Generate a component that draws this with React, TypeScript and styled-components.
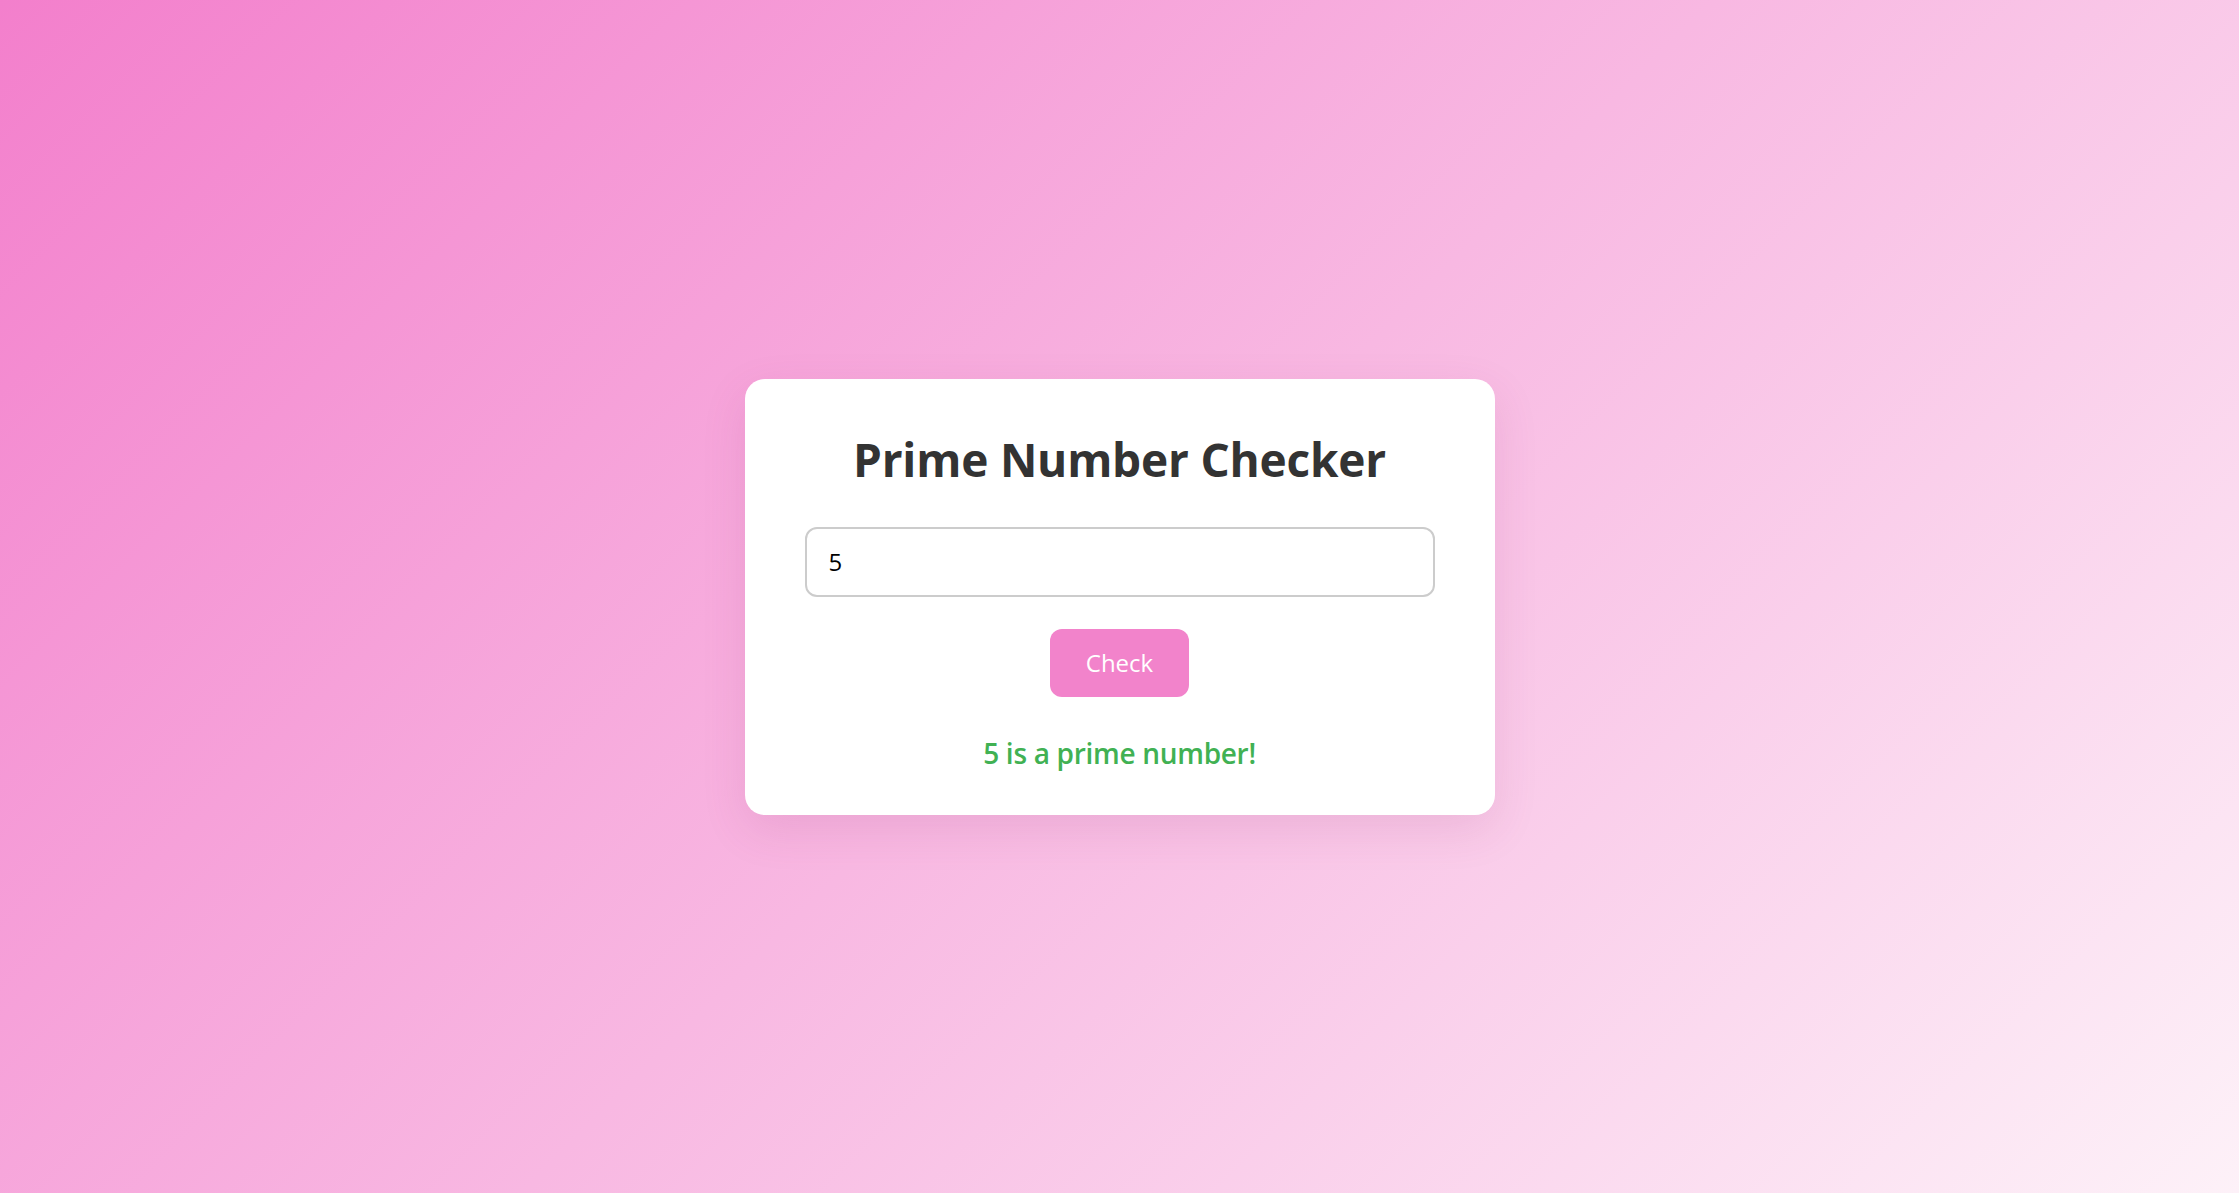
import React, { useState } from "react";
import styled, { createGlobalStyle } from "styled-components";

const GlobalStyle = createGlobalStyle`
  html, body {
    margin: 0;
    padding: 0;
  }
  body {
    font-family: "Open Sans", "Noto Sans", sans-serif;
  }
  * { box-sizing: border-box; }
`;

const Page = styled.div`
  min-height: 100vh;
  display: flex;
  align-items: center;
  justify-content: center;
  background: linear-gradient(135deg, #f37fcc 0%, #fdf1f8 100%);
`;

const Card = styled.div`
  width: 750px;
  background: #ffffff;
  border-radius: 20px;
  padding: 50px 60px 42px;
  display: flex;
  flex-direction: column;
  align-items: stretch;
  box-shadow: 0 15px 45px rgba(150, 40, 110, 0.12);
`;

const Title = styled.h1`
  margin: 0;
  font-size: 46px;
  line-height: 60px;
  font-weight: 700;
  letter-spacing: -0.2px;
  color: #333333;
  text-align: center;
`;

const NumberInput = styled.input`
  margin-top: 38px;
  height: 70px;
  width: 100%;
  border: 2px solid #cccccc;
  border-radius: 12px;
  padding: 0 22px;
  font-family: inherit;
  font-size: 24px;
  color: #000000;
  outline: none;
  background: #ffffff;
`;

const CheckButton = styled.button`
  margin-top: 32px;
  align-self: center;
  width: 139px;
  height: 68px;
  border: none;
  border-radius: 12px;
  background: #f283cb;
  color: #ffffff;
  font-family: inherit;
  font-size: 24px;
  cursor: pointer;
`;

const Result = styled.p<{ $prime: boolean }>`
  margin: 36px 0 0;
  font-size: 28px;
  line-height: 40px;
  font-weight: 600;
  letter-spacing: -0.3px;
  text-align: center;
  color: ${(p) => (p.$prime ? "#41b153" : "#e0474c")};
`;

function isPrime(n: number): boolean {
  if (!Number.isInteger(n) || n < 2) return false;
  for (let i = 2; i * i <= n; i++) if (n % i === 0) return false;
  return true;
}

export default function App() {
  const [value, setValue] = useState("5");
  const [checked, setChecked] = useState<number>(5);
  const prime = isPrime(checked);
  return (
    <>
      <GlobalStyle />
      <Page>
        <Card>
          <Title>Prime Number Checker</Title>
          <NumberInput
            type="text"
            value={value}
            onChange={(e) => setValue(e.target.value)}
          />
          <CheckButton onClick={() => setChecked(Number(value))}>Check</CheckButton>
          <Result $prime={prime}>
            {prime ? `${checked} is a prime number!` : `${checked} is not a prime number.`}
          </Result>
        </Card>
      </Page>
    </>
  );
}
